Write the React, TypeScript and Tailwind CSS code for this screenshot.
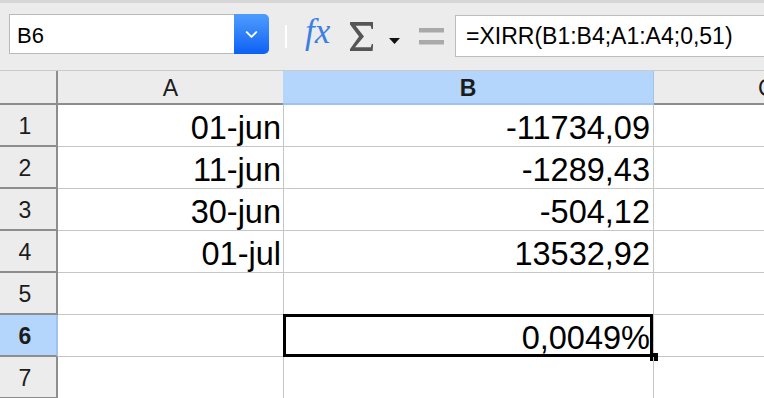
import { ChevronDown } from "lucide-react";

interface Row {
  n: number;
  a: string;
  b: string;
  active?: boolean;
}

const rows: Row[] = [
  { n: 1, a: "01-jun", b: "-11734,09" },
  { n: 2, a: "11-jun", b: "-1289,43" },
  { n: 3, a: "30-jun", b: "-504,12" },
  { n: 4, a: "01-jul", b: "13532,92" },
  { n: 5, a: "", b: "" },
  { n: 6, a: "", b: "0,0049%", active: true },
  { n: 7, a: "", b: "" },
];

function Sigma() {
  return (
    <svg width="23" height="29" viewBox="0 0 23 29" className="ml-[16px] mt-[19px] shrink-0">
      <polygon
        fill="#555555"
        points="0,0 23,0 23,7 21.6,7 20.6,3.8 5.6,3.8 14,14.5 5,25.2 20.8,25.2 21.8,22 23.2,22 22.6,29 0,29 0,27 9,14.5 0,2.4"
      />
    </svg>
  );
}

export default function App() {
  return (
    <div className="h-[398px] w-[764px] overflow-hidden bg-white font-['Liberation_Sans',Arial,sans-serif] text-black">
      {/* top edge */}
      <div className="h-[3px] bg-[#d6d6d6]" />

      {/* Formula bar */}
      <div className="flex h-[68px] items-start border-b border-[#cacaca] bg-[#ececec]">
        <div className="ml-[9px] mt-[11px] flex h-[40px] w-[260px] shrink-0">
          <div className="flex flex-1 items-center border border-r-0 border-[#b9b9b9] bg-white pl-[7px] pt-[3px] text-[22px] leading-none">
            B6
          </div>
          <div className="flex w-[35px] items-center justify-center rounded-r-[5px] bg-linear-to-b from-[#4f9cfd] to-[#0b60f4]">
            <ChevronDown className="h-[19px] w-[19px] text-white" strokeWidth={2.4} />
          </div>
        </div>

        <div className="ml-[16px] mt-[22px] h-[23px] w-[2px] shrink-0 bg-white" />

        <div className="ml-[15px] mt-[11px] h-[35px] w-[32px] shrink-0 pl-[3px] font-['Liberation_Serif',serif] text-[35px] italic leading-[35px] text-[#3a7fe4]">
          fx
        </div>

        <Sigma />

        <svg width="11" height="6" viewBox="0 0 11 6" className="ml-[16px] mt-[35px] shrink-0">
          <polygon points="0,0 11,0 5.5,6" fill="#111" />
        </svg>

        <svg width="25" height="17" viewBox="0 0 25 17" className="ml-[19px] mt-[25px] shrink-0">
          <rect x="0" y="0" width="25" height="4.5" fill="#a9a9a9" />
          <rect x="0" y="12" width="25" height="4.5" fill="#a9a9a9" />
        </svg>

        <div className="ml-[11px] mt-[12px] flex h-[42px] w-[340px] shrink-0 items-center border border-[#bdbdbd] bg-white pl-[10px] text-[23px] leading-none">
          =XIRR(B1:B4;A1:A4;0,51)
        </div>
      </div>

      {/* Column headers */}
      <div className="flex h-[34px] text-[23px] leading-none text-[#1c1c1c]">
        <div className="w-[58px] shrink-0 border-b-2 border-r-2 border-[#8d8d8d] bg-[#ececec]" />
        <div className="flex w-[225px] shrink-0 items-center justify-center border-b-2 border-[#8d8d8d] bg-[#ececec] pt-[3px]">
          A
        </div>
        <div className="flex w-[371px] shrink-0 items-center justify-center border-b-2 border-r border-[#9fc3ef] bg-[#b4d5fc] pt-[3px] font-bold">
          B
        </div>
        <div className="flex flex-1 items-center border-b-2 border-[#8d8d8d] bg-[#ececec] pl-[104px] pt-[3px]">
          C
        </div>
      </div>

      {/* Rows */}
      {rows.map((row) => (
        <div key={row.n} className="flex h-[42px]">
          <div
            className={`flex w-[58px] shrink-0 items-center justify-center border-b-2 border-b-[#8d8d8d] pr-[6px] pt-[2px] text-[23px] leading-none text-[#1c1c1c] ${
              row.active ? "border-r-2 border-r-[#9fc3ef] bg-[#b4d5fc] font-bold" : "border-r-2 border-r-[#8d8d8d] bg-[#ececec]"
            }`}
          >
            {row.n}
          </div>
          <div className="flex w-[226px] shrink-0 items-center justify-end border-b border-r border-[#c6c6c6] pr-[2px] pt-[5px] text-[32.5px] leading-none">
            {row.a}
          </div>
          <div className="relative flex w-[370px] shrink-0 items-center justify-end border-b border-r border-[#c6c6c6] pr-[3px] pt-[5px] text-[32.5px] leading-none">
            {row.b}
            {row.active && (
              <>
                <div className="absolute -left-px -top-px h-[43px] w-[370px] border-[3px] border-black" />
                <div className="absolute left-[366px] top-[38px] h-[8px] w-[8px] bg-black" />
              </>
            )}
          </div>
          <div className="flex-1 border-b border-[#c6c6c6]" />
        </div>
      ))}
    </div>
  );
}
